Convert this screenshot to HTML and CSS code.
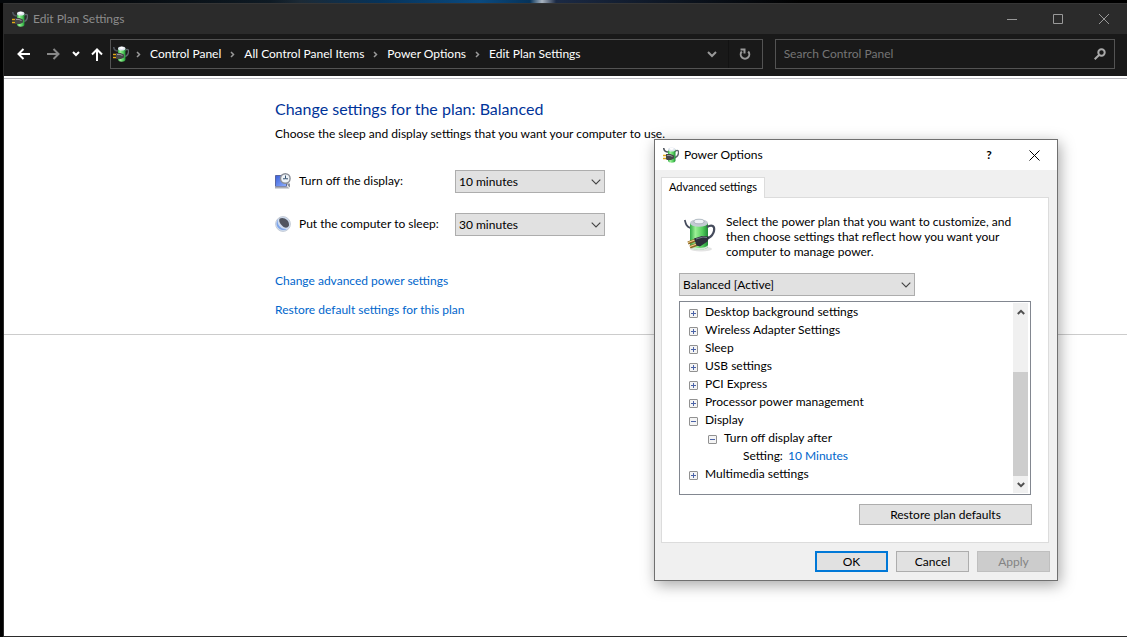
FILE: index.html
```
<!DOCTYPE html>
<html lang="en">
<head>
    <meta charset="UTF-8">
    <meta name="viewport" content="width=device-width, initial-scale=1.0">
    <title>Edit Plan Settings</title>
    <link rel="stylesheet" href="styles.css">
</head>
<body>

    <!-- Shared icons -->
    <svg class="defs" width="0" height="0" aria-hidden="true">
        <defs>
            <linearGradient id="green" x1="0" x2="1" y1="0" y2="0">
                <stop offset="0" stop-color="#2fa845"/>
                <stop offset="0.3" stop-color="#9cf096"/>
                <stop offset="0.7" stop-color="#52cc5c"/>
                <stop offset="1" stop-color="#1f8a36"/>
            </linearGradient>
            <linearGradient id="screen" x1="0" x2="1" y1="0" y2="1">
                <stop offset="0" stop-color="#3a5fd8"/>
                <stop offset="1" stop-color="#8fb0ff"/>
            </linearGradient>
        </defs>
        <symbol id="power" viewBox="0 0 16 16">
            <path d="M.7 1C1 3.500 2 5 5 5" fill="none" stroke="#50565e" stroke-width="1.600"/>
            <path d="M12 4.500c3-2.500 4-.5 3.300 2.500-.5 2-2 3.500-5 4" fill="none" stroke="#60666e" stroke-width="1.400"/>
            <path d="M5 2.500v11c0 3 7.500 3 7.500 0v-11z" fill="url(#green)"/>
            <ellipse cx="8.700" cy="2.600" rx="3.700" ry="2" fill="#dfe5ee"/>
            <ellipse cx="8.700" cy="1.800" rx="2" ry="1.100" fill="#fff"/>
            <path d="M0 8.500h4M0 11.500h4" stroke="#e0a818" stroke-width="1.300"/>
            <path d="M3 7h4.500L11 8.500v3L8 13H4l-1-1z" fill="#464649"/>
            <path d="M4 8.500h3l2.500 1" stroke="#96969c" fill="none"/>
        </symbol>
        <symbol id="chevron" viewBox="0 0 10 6">
            <path d="M.7.7 5 5 9.300.7" fill="none" stroke="currentColor" stroke-width="1.100"/>
        </symbol>
        <symbol id="arrow" viewBox="0 0 8 6">
            <path d="M.8 1 4 4.200 7.200 1" fill="none" stroke="currentColor" stroke-width="2"/>
        </symbol>
    </svg>

    <div class="window">
        <header class="titlebar">
            <svg class="icon"><use href="#power"/></svg>
            <span class="title">Edit Plan Settings</span>
            <button class="caption" aria-label="Minimize"><svg width="10" height="10"><path d="M0 5.500h10"/></svg></button>
            <button class="caption" aria-label="Maximize"><svg width="10" height="10"><path d="M.5.5h9v9h-9z"/></svg></button>
            <button class="caption" aria-label="Close"><svg width="10" height="10"><path d="M0 0l10 10M10 0L0 10"/></svg></button>
        </header>

        <nav class="toolbar">
            <div class="history">
                <button aria-label="Back"><svg width="13" height="12"><path d="M13 6H1.500M6.500 1l-5 5 5 5"/></svg></button>
                <button class="off" aria-label="Forward"><svg width="13" height="12"><path d="M0 6h11.500M6.500 1l5 5-5 5"/></svg></button>
                <button class="recent" aria-label="Recent locations"><svg width="8" height="6"><path d="M1 1l3 3 3-3"/></svg></button>
                <button class="up" aria-label="Up"><svg width="12" height="13"><path d="M6 13V1.500M1 6.500l5-5 5 5"/></svg></button>
            </div>
            <div class="address">
                <svg class="icon"><use href="#power"/></svg>
                <svg class="sep"><path d="M1 1l2.500 2.500L1 6"/></svg>
                <a href="#">Control Panel</a>
                <svg class="sep"><path d="M1 1l2.500 2.500L1 6"/></svg>
                <a href="#">All Control Panel Items</a>
                <svg class="sep"><path d="M1 1l2.500 2.500L1 6"/></svg>
                <a href="#">Power Options</a>
                <svg class="sep"><path d="M1 1l2.500 2.500L1 6"/></svg>
                <a href="#">Edit Plan Settings</a>
                <button class="previous" aria-label="Previous locations"><svg width="10" height="7"><path d="M1 1l4 4 4-4"/></svg></button>
                <button class="refresh" aria-label="Refresh"><svg width="12" height="12"><path d="M2.800 3.500A4.300 4.300 0 1 0 9.200 3.500M1.500 1.500H5.500V5.500"/></svg></button>
            </div>
            <div class="search">
                <input type="text" placeholder="Search Control Panel" aria-label="Search Control Panel">
                <svg width="12" height="12"><circle cx="7.500" cy="4.500" r="3.200"/><path d="M5.300 6.700.7 11.300"/></svg>
            </div>
        </nav>

        <main>
            <section class="plan">
                <h1>Change settings for the plan: Balanced</h1>
                <p>Choose the sleep and display settings that you want your computer to use.</p>

                <div class="setting">
                    <svg class="icon" viewBox="0 0 16 16">
                        <path d="M.5 2.500h11v11H.5z" fill="url(#screen)" stroke="#5a66a0"/>
                        <path d="M0 15.500h14.500l-2-2H0z" fill="#a9acb4"/>
                        <circle cx="10.300" cy="5.500" r="4.800" fill="#eef3f8" stroke="#8b8f98" stroke-width="1.400"/>
                        <path d="M10.500 2.500v3.300H13M8 5.800h2" fill="none" stroke="#35516e"/>
                        <path d="M12 10.500h3v4l-2-1.500z" fill="#8b8f98"/>
                    </svg>
                    <label for="display">Turn off the display:</label>
                    <span class="select">
                        <select id="display"><option>10 minutes</option></select>
                        <svg><use href="#chevron"/></svg>
                    </span>
                </div>

                <div class="setting">
                    <svg class="icon" viewBox="0 0 16 16">
                        <circle cx="8" cy="8" r="7.400" fill="#cfdcf0" stroke="#c5ccd6"/>
                        <path d="M3 3C1.500 8 5 13.500 12 13c-3 2-9 1-10.300-4C1.300 6.500 2 4.500 3 3z" fill="#7fa6ea"/>
                        <path d="M4.500 2.800C8 .5 14.500 3.500 14 9.500c-1.500 3-4.500 2.500-6.500.5S3.500 6 4.500 2.800z" fill="#50545f"/>
                    </svg>
                    <label for="sleep">Put the computer to sleep:</label>
                    <span class="select">
                        <select id="sleep"><option>30 minutes</option></select>
                        <svg><use href="#chevron"/></svg>
                    </span>
                </div>

                <div class="links">
                    <a href="#">Change advanced power settings</a>
                    <a href="#">Restore default settings for this plan</a>
                </div>
            </section>
        </main>
    </div>

    <div class="dialog" role="dialog" aria-labelledby="dialogTitle">
        <header class="dialog-title">
            <svg class="icon"><use href="#power"/></svg>
            <span class="title" id="dialogTitle">Power Options</span>
            <button class="caption" aria-label="Help">?</button>
            <button class="caption" aria-label="Close"><svg width="11" height="11"><path d="M.5.5l10 10M10.500.5l-10 10"/></svg></button>
        </header>

        <div class="dialog-body">
            <button class="tab">Advanced settings</button>

            <div class="panel">
                <div class="intro">
                    <svg width="32" height="34" viewBox="0 0 32 34">
                        <ellipse cx="17" cy="31" rx="11" ry="2.500" fill="#e3e3e3"/>
                        <path d="M.8 2c1 4 1.500 6.500 5.500 8" fill="none" stroke="#454b5c" stroke-width="1.800"/>
                        <path d="M6 5v23c0 5 18 5 18 0V5z" fill="url(#green)"/>
                        <path d="M6 27c2 4 16 4 18 0v1.500c-1 4.500-17 4.500-18 0z" fill="#d5e8d8"/>
                        <ellipse cx="15" cy="5" rx="9" ry="3.800" fill="#c3cbd3"/>
                        <ellipse cx="15" cy="3.500" rx="5" ry="2.300" fill="#eef2f6" stroke="#8f9aa5" stroke-width=".6"/>
                        <path d="M23 9c5-3 8-1 7 4s-4 6-7 8" fill="none" stroke="#454b5c" stroke-width="2.200"/>
                        <path d="M4 25l8-3M6 29l8-3" stroke="#8b6420" stroke-width="3"/>
                        <path d="M4 24.500l8-3M6 28.500l8-3" stroke="#f0d090" stroke-width="1.200"/>
                        <path d="M10 20.500l8-2.500 7 .5-1.500 5-7.500 5-3.500-1z" fill="#2d303c"/>
                        <path d="M12 21l7-2 4 .5" fill="none" stroke="#777c8d"/>
                    </svg>
                    <p>Select the power plan that you want to customize, and then choose settings that reflect how you want your computer to manage power.</p>
                </div>

                <span class="select plan-select">
                    <select aria-label="Power plan"><option>Balanced [Active]</option></select>
                    <svg><use href="#chevron"/></svg>
                </span>

                <div class="tree">
                    <ul>
                        <li><button class="plus" aria-label="Expand"></button>Desktop background settings</li>
                        <li><button class="plus" aria-label="Expand"></button>Wireless Adapter Settings</li>
                        <li><button class="plus" aria-label="Expand"></button>Sleep</li>
                        <li><button class="plus" aria-label="Expand"></button>USB settings</li>
                        <li><button class="plus" aria-label="Expand"></button>PCI Express</li>
                        <li><button class="plus" aria-label="Expand"></button>Processor power management</li>
                        <li><button aria-label="Collapse"></button>Display
                            <ul>
                                <li><button aria-label="Collapse"></button>Turn off display after
                                    <ul>
                                        <li class="value">Setting: <a href="#">10 Minutes</a></li>
                                    </ul>
                                </li>
                            </ul>
                        </li>
                        <li><button class="plus" aria-label="Expand"></button>Multimedia settings</li>
                    </ul>
                    <div class="scrollbar">
                        <button class="scroll-up" aria-label="Scroll up"><svg><use href="#arrow"/></svg></button>
                        <div class="thumb"></div>
                        <button aria-label="Scroll down"><svg><use href="#arrow"/></svg></button>
                    </div>
                </div>

                <button class="btn restore">Restore plan defaults</button>
            </div>

            <footer>
                <button class="btn default">OK</button>
                <button class="btn">Cancel</button>
                <button class="btn" disabled>Apply</button>
            </footer>
        </div>
    </div>

</body>
</html>
```
FILE: styles.css
```
* {
    box-sizing: border-box;
}
body {
    margin: 0;
    min-height: 100vh;
    display: flex;
    padding: 3px 0 0 3px;
    background: linear-gradient(90deg, #05080b 100px, #0e1a24 270px, #1c2a36 300px, #06335a 380px, #0a4a80 480px, #06335a 530px, #a9b4c0 542px, #1b2a45 556px, #0c1420 680px, #000 800px) no-repeat 0 0 / 100% 3px #000;
    color: #000;
    font-family: Lato, "Open Sans", sans-serif;
    font-size: 12px;
    line-height: 16px;
}
button, input, select {
    font: inherit;
    color: inherit;
    margin: 0;
    padding: 0;
    border: none;
    border-radius: 0;
    background: none;
}
a {
    color: #0066cc;
    text-decoration: none;
}
h1, p, ul {
    margin: 0;
    padding: 0;
}
svg {
    display: block;
    flex: none;
}
.defs {
    position: absolute;
}
.icon {
    width: 16px;
    height: 16px;
}
.title {
    flex: 1;
}

/* Control Panel window */
.window {
    flex: 1;
    display: flex;
    flex-direction: column;
    border-left: 1px solid #2b2b2b;
    border-bottom: 1px solid #2b2b2b;
    background: #fff;
}
.titlebar {
    display: flex;
    align-items: center;
    height: 31px;
    padding: 0 3px 0 8px;
    gap: 5px;
    background: #2b2b2b;
    border-top: 1px solid #353535;
    color: #8c8c8c;
}
.titlebar .caption {
    width: 41px;
    height: 30px;
    display: grid;
    place-items: center;
}
.titlebar .caption svg,
.toolbar svg:not(.icon) {
    fill: none;
    stroke: #999;
}
.toolbar {
    display: flex;
    align-items: center;
    height: 42px;
    padding: 0 12px 2px 13px;
    background: #191919;
    color: #fff;
}
.history {
    display: flex;
    align-items: center;
    width: 93px;
}
.history button {
    margin-right: 17px;
}
.history .off {
    margin-right: 12px;
}
.history .recent {
    margin-right: 11px;
}
.history .up {
    margin-right: 0;
}
.toolbar .history svg {
    stroke: #fff;
    stroke-width: 2;
}
.toolbar .history .off svg {
    stroke: #888;
}
.address {
    flex: 1;
    display: flex;
    align-items: center;
    height: 30px;
    padding-left: 2px;
    border: 1px solid #535353;
}
.address a {
    color: #fff;
    white-space: nowrap;
}
.address .sep {
    width: 5px;
    height: 7px;
    margin: 0 9px;
    stroke-width: 1.5;
}
.address .icon + .sep {
    margin-left: 7px;
}
.previous, .refresh {
    width: 33px;
    height: 28px;
    display: grid;
    place-items: center;
}
.previous {
    margin-left: auto;
    border-right: 1px solid #121212;
}
.previous svg {
    stroke-width: 2;
}
.toolbar .refresh svg {
    stroke-width: 2;
}
.search {
    width: 31%;
    display: flex;
    align-items: center;
    height: 30px;
    margin-left: 12px;
    padding: 0 8px;
    border: 1px solid #535353;
}
.search input {
    flex: 1;
    min-width: 0;
    outline: none;
}
.search input::placeholder {
    color: #757575;
    opacity: 1;
}
.toolbar .search svg {
    stroke: #aaa;
    stroke-width: 2;
}

/* Page */
main {
    margin-top: 2px;
    border-top: 1px solid #b9b9be;
    border-bottom: 1px solid #ccc;
}
.plan {
    padding: 20px 16px 16px 271px;
}
h1 {
    color: #003399;
    font-size: 16px;
    font-weight: normal;
    line-height: 20px;
}
.plan p {
    margin: 7px 0 28px;
}
.setting {
    display: flex;
    align-items: center;
    height: 23px;
    margin-bottom: 20px;
}
.setting .icon,
.setting label {
    margin-bottom: 2px;
}
.setting label {
    width: 156px;
    margin-left: 8px;
}
.select {
    position: relative;
    display: block;
    width: 150px;
}
.select select {
    appearance: none;
    display: block;
    width: 100%;
    height: 23px;
    padding: 0 20px 0 3px;
    border: 1px solid #adadad;
    background: #e1e1e1;
}
.select svg {
    position: absolute;
    right: 4px;
    top: 9px;
    width: 10px;
    height: 6px;
    color: #444;
    pointer-events: none;
}
.links {
    display: flex;
    flex-direction: column;
    align-items: flex-start;
    gap: 13px;
    margin-top: 37px;
}

/* Power Options dialog */
.dialog {
    position: absolute;
    left: 654px;
    top: 139px;
    width: 404px;
    background: #f0f0f0;
    border: 1px solid #707070;
    box-shadow: 2px 4px 14px rgba(0, 0, 0, 0.35);
}
.dialog-title {
    display: flex;
    align-items: center;
    height: 30px;
    padding-left: 8px;
    gap: 5px;
    background: #fff;
}
.dialog-title .caption {
    width: 44px;
    height: 28px;
    display: grid;
    place-items: center;
    font-weight: bold;
}
.dialog-title .caption:last-child {
    width: 46px;
    margin-left: -5px;
}
.dialog-title .caption svg {
    stroke: #000;
}
.dialog-body {
    padding: 7px 7px 8px 6px;
}
.tab {
    position: relative;
    display: block;
    height: 21px;
    padding: 0 7px 2px;
    margin-bottom: -1px;
    border: 1px solid #dcdcdc;
    border-bottom: none;
    background: #fff;
    font-size: 11px;
}
.panel {
    margin-right: 1px;
    padding: 17px 16px 17px 17px;
    background: #fff;
    border: 1px solid #dcdcdc;
}
.intro {
    display: flex;
    padding: 3px 5px 0 5px;
    gap: 10px;
}
.intro p {
    width: 300px;
    margin-top: -4px;
    line-height: 15px;
}
.plan-select {
    width: 236px;
    margin-top: 14px;
}
.tree {
    display: flex;
    justify-content: space-between;
    height: 194px;
    margin-top: 5px;
    padding: 1px 2px 1px 1px;
    border: 1px solid #828790;
    margin-right: 1px;
}
.tree ul {
    list-style: none;
    line-height: 18px;
}
.tree > ul {
    padding-left: 8px;
}
.tree ul ul {
    padding-left: 19px;
}
.tree .value {
    padding-left: 16px;
}
.tree li button {
    display: inline-block;
    width: 9px;
    height: 9px;
    margin-right: 7px;
    vertical-align: -1px;
    border: 1px solid #919191;
    border-radius: 1px;
    background: linear-gradient(#4b63a7, #4b63a7) center / 5px 1px no-repeat, #f4f4f4;
}
.tree li .plus {
    background: linear-gradient(#4b63a7, #4b63a7) center / 5px 1px no-repeat, linear-gradient(#4b63a7, #4b63a7) center / 1px 5px no-repeat, #f4f4f4;
}
.tree a {
    margin-left: 2px;
}
.scrollbar {
    display: flex;
    flex-direction: column;
    width: 15px;
    background: #f0f0f0;
}
.scrollbar button {
    display: grid;
    place-items: center;
    height: 17px;
    color: #505050;
}
.scrollbar svg {
    width: 8px;
    height: 6px;
}
.scroll-up svg {
    transform: rotate(180deg);
}
.thumb {
    height: 104px;
    margin-top: auto;
    background: #cdcdcd;
}
.btn {
    width: 73px;
    height: 21px;
    line-height: 19px;
    background: #e1e1e1;
    border: 1px solid #adadad;
}
.btn.default {
    border: 2px solid #0078d7;
    line-height: 17px;
}
.btn:disabled {
    background: #ccc;
    border-color: #bfbfbf;
    color: #838383;
}
.restore {
    display: block;
    width: 173px;
    margin: 9px 0 0 auto;
}
footer {
    display: flex;
    justify-content: flex-end;
    gap: 8px;
    margin-top: 8px;
}
```
